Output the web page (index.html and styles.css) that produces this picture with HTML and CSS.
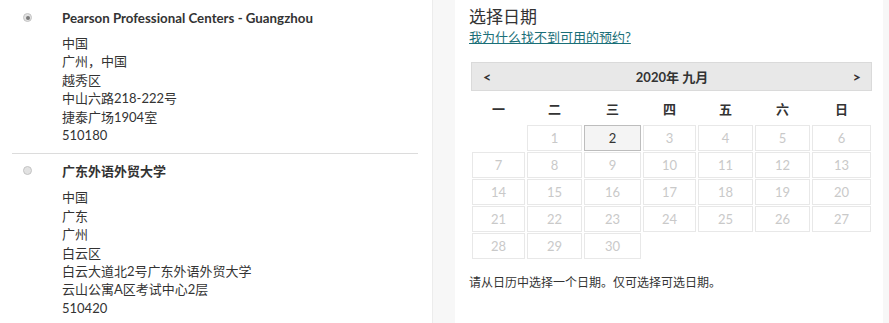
FILE: index.html
```html
<!DOCTYPE html>
<html lang="zh-CN">
<head>
<meta charset="utf-8">
<link rel="stylesheet" href="styles.css">
</head>
<body>
<div class="page">
  <section class="left">
    <div class="site">
      <div class="radio-col"><span class="radio checked"></span></div>
      <div class="info">
        <div class="name">Pearson Professional Centers - Guangzhou</div>
        <div class="addr">
          <div>中国</div>
          <div>广州，中国</div>
          <div>越秀区</div>
          <div>中山六路218-222号</div>
          <div>捷泰广场1904室</div>
          <div>510180</div>
        </div>
      </div>
    </div>
    <div class="site second">
      <div class="radio-col"><span class="radio"></span></div>
      <div class="info">
        <div class="name cjk">广东外语外贸大学</div>
        <div class="addr">
          <div>中国</div>
          <div>广东</div>
          <div>广州</div>
          <div>白云区</div>
          <div>白云大道北2号广东外语外贸大学</div>
          <div>云山公寓A区考试中心2层</div>
          <div>510420</div>
        </div>
      </div>
    </div>
  </section>
  <section class="right">
    <h2 class="title">选择日期</h2>
    <a class="why" href="#">我为什么找不到可用的预约?</a>
    <div class="cal">
      <div class="cal-head">
        <span class="nav">&lt;</span>
        <span class="month">2020年 九月</span>
        <span class="nav">&gt;</span>
      </div>
      <div class="grid wk">
        <div>一</div><div>二</div><div>三</div><div>四</div><div>五</div><div>六</div><div>日</div>
      </div>
      <div class="grid days">
        <div class="empty"></div>
        <div class="d">1</div>
        <div class="d sel">2</div>
        <div class="d">3</div>
        <div class="d">4</div>
        <div class="d">5</div>
        <div class="d">6</div>
        <div class="d">7</div>
        <div class="d">8</div>
        <div class="d">9</div>
        <div class="d">10</div>
        <div class="d">11</div>
        <div class="d">12</div>
        <div class="d">13</div>
        <div class="d">14</div>
        <div class="d">15</div>
        <div class="d">16</div>
        <div class="d">17</div>
        <div class="d">18</div>
        <div class="d">19</div>
        <div class="d">20</div>
        <div class="d">21</div>
        <div class="d">22</div>
        <div class="d">23</div>
        <div class="d">24</div>
        <div class="d">25</div>
        <div class="d">26</div>
        <div class="d">27</div>
        <div class="d">28</div>
        <div class="d">29</div>
        <div class="d">30</div>
      </div>
    </div>
    <p class="hint">请从日历中选择一个日期。仅可选择可选日期。</p>
  </section>
</div>
</body>
</html>
```
FILE: styles.css
```css
* { box-sizing: border-box; }
html, body { margin: 0; padding: 0; }
body {
  background: #f7f7f7;
  font-family: "Lato", "Noto Sans CJK SC", sans-serif;
  color: #333;
  font-size: 13px;
}
.page {
  display: flex;
  height: 323px;
  gap: 22px;
}
.left {
  width: 433px;
  background: #fff;
  border-right: 1px solid #ececec;
  padding: 0 14px 0 12px;
}
.site {
  display: flex;
  padding: 9px 0 9px;
  border-bottom: 1px solid #dcdcdc;
}
.site.second {
  border-bottom: none;
  padding-top: 8px;
}
.radio-col {
  width: 50px;
  flex: none;
  padding-left: 11px;
  padding-top: 4px;
}
.radio {
  display: block;
  width: 9px;
  height: 9px;
  border-radius: 50%;
  border: 1px solid #c4c4c4;
  background: #e2e2e2;
  position: relative;
}
.radio.checked::after {
  content: "";
  position: absolute;
  left: 1.5px;
  top: 1.5px;
  width: 4px;
  height: 4px;
  border-radius: 50%;
  background: #7a7a7a;
}
.name {
  font-weight: 700;
  line-height: 18px;
  font-size: 13.3px;
}
.name.cjk { font-size: 13px; }
.addr {
  margin-top: 7px;
  line-height: 18.4px;
}
.second .addr { margin-top: 8px; }
.right {
  width: 428px;
  background: #fff;
  padding: 7px 0 0 14px;
}
.title {
  margin: 0;
  font-size: 17px;
  font-weight: 400;
  line-height: 20px;
}
.why {
  display: block;
  margin-top: 1px;
  line-height: 18px;
  color: #1a6f78;
  text-decoration: underline;
  width: max-content;
}
.cal {
  margin: 16px 0 0 2px;
  width: 401px;
}
.cal-head {
  display: flex;
  justify-content: space-between;
  align-items: center;
  height: 29px;
  background: #e8e8e8;
  border: 1px solid #dadada;
  padding: 0 10px 0 11px;
  font-weight: 700;
}
.nav { font-size: 14px; font-weight: 900; }
.month { font-weight: 700; }
.grid {
  display: grid;
  grid-template-columns: 53px 55px 57px 53px 55px 55px 59px;
  column-gap: 2px;
  margin-left: 1px;
}
.wk {
  margin-top: 4px;
  height: 26px;
  align-items: center;
  text-align: center;
  font-weight: 700;
}
.days {
  margin-top: 4px;
  row-gap: 1px;
  grid-auto-rows: 26px;
}
.d {
  border: 1px solid #e8e8e8;
  color: #c9c9c9;
  text-align: center;
  line-height: 24px;
  background: #fff;
}
.d.sel {
  border-color: #bdbdbd;
  background: #f4f4f4;
  color: #333;
}
.hint {
  margin: 15px 0 0;
  font-size: 12px;
  line-height: 18px;
}
```
